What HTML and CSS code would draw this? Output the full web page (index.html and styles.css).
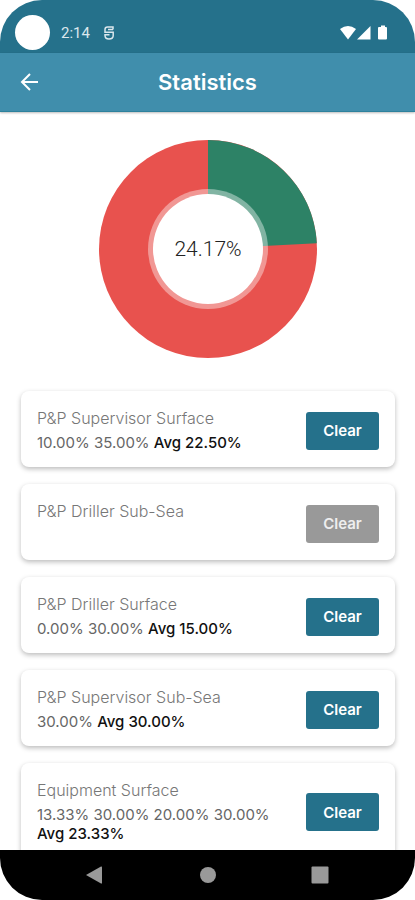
FILE: index.html
```html
<!DOCTYPE html>
<html lang="en">
<head>
<meta charset="utf-8">
<meta name="viewport" content="width=device-width, initial-scale=1">
<title>Statistics</title>
<link rel="stylesheet" href="styles.css">
</head>
<body>
<div class="phone">
  <div class="status">
    <span class="camera"></span>
    <span class="time">2:14</span>
    <svg class="notice" width="12" height="16" viewBox="0 0 12 16" fill="none" stroke="currentColor" stroke-width="1.500"><path d="M10 4.500V2H4.500Q2 2 2 4.500V7.200H10.200V10.500Q10.200 14 6 14Q2 14 2 10.500V9.800H6.500M5 4.600H10"/></svg>
    <svg class="signals" width="48" height="16" viewBox="0 0 48 16" fill="currentColor"><path d="M0 4Q8-2 16 4L8 14.500Z"/><path d="M17 14.500 30.500 1V14.500Z"/><path d="M39 2h2V.500h4V2h1q1 0 1 1v10.500q0 1-1 1h-7q-1 0-1-1V3q0-1 1-1Z"/></svg>
  </div>
  <header class="appbar">
    <button class="back" type="button" aria-label="Back"><svg width="20" height="20" viewBox="0 0 20 20" fill="none" stroke="currentColor" stroke-width="2"><path d="M18 10H2M10 2 2 10l8 8"/></svg></button>
    <h1>Statistics</h1>
  </header>
  <main>
    <div class="chart">
      <svg width="220" height="220" viewBox="0 0 220 220" aria-hidden="true">
        <circle cx="110" cy="110" r="109" fill="#e8524e"/>
        <path d="M110 110V1A109 109 0 0 1 218.850 104.300Z" fill="#2d8266"/>
        <circle cx="110" cy="110" r="60" fill="#fff" fill-opacity=".4"/>
        <circle cx="110" cy="110" r="55" fill="#fff"/>
      </svg>
      <span class="total">24.17%</span>
    </div>
    <ul class="cards">
      <li class="card"><div class="info"><h2>P&amp;P Supervisor Surface</h2><p>10.00% 35.00% <b>Avg 22.50%</b></p></div><button class="clear" type="button">Clear</button></li>
      <li class="card"><div class="info"><h2>P&amp;P Driller Sub-Sea</h2><p></p></div><button class="clear" type="button" disabled>Clear</button></li>
      <li class="card"><div class="info"><h2>P&amp;P Driller Surface</h2><p>0.00% 30.00% <b>Avg 15.00%</b></p></div><button class="clear" type="button">Clear</button></li>
      <li class="card"><div class="info"><h2>P&amp;P Supervisor Sub-Sea</h2><p>30.00% <b>Avg 30.00%</b></p></div><button class="clear" type="button">Clear</button></li>
      <li class="card"><div class="info"><h2>Equipment Surface</h2><p>13.33% 30.00% 20.00% 30.00% <b>Avg 23.33%</b></p></div><button class="clear" type="button">Clear</button></li>
    </ul>
  </main>
  <nav class="system">
    <button type="button" aria-label="Back"><svg width="20" height="20" viewBox="0 0 20 20"><path d="M1 10 16 1.500q1-.5 1 1v15q0 1.500-1 1Z"/></svg></button>
    <button type="button" aria-label="Home"><svg width="20" height="20" viewBox="0 0 20 20"><circle cx="10" cy="10" r="8"/></svg></button>
    <button type="button" aria-label="Recent apps"><svg width="20" height="20" viewBox="0 0 20 20"><rect x="1.500" y="1.500" width="17" height="17" rx="1"/></svg></button>
  </nav>
</div>
</body>
</html>
```
FILE: styles.css
```css
* { box-sizing: border-box; }
body { margin: 0; background: #fff; font-family: Inter, sans-serif; }
button { border: 0; padding: 0; font: inherit; }
h1, h2, p, ul { margin: 0; padding: 0; }

.phone {
  display: flex;
  flex-direction: column;
  height: 100vh;
  overflow: hidden;
  border-radius: 42px;
}

.status {
  display: flex;
  flex: none;
  align-items: flex-end;
  padding: 15px 27px 3px 15px;
  background: #25718b;
  color: #fff;
}
.camera { width: 35px; height: 35px; border-radius: 50%; background: #fff; }
.time { margin: 0 0 7px 11px; font: 15px/20px Roboto, sans-serif; color: #dbe7ed; }
.notice { margin: 0 0 9px 13px; color: #dbe7ed; }
.signals { margin: 0 0 9px auto; }

.appbar {
  display: grid;
  flex: none;
  grid-template-columns: 20px 1fr 20px;
  align-items: center;
  padding: 16px 20px;
  border-bottom: 1px solid #2d829d;
  background: #408eac;
  box-shadow: 0 1px 2px #0004;
  color: #fff;
}
.appbar h1 { font-size: 22px; line-height: 26px; font-weight: 600; text-align: center; }
.back { display: flex; background: none; color: inherit; }

main { flex: 1; min-height: 0; overflow: hidden; padding: 27px 20px 0 21px; }
.chart { display: grid; place-items: center; }
.chart > * { grid-area: 1 / 1; }
.chart svg { display: block; }
.total { font: 300 21px/26px Roboto, sans-serif; color: #222; }

.cards { display: grid; gap: 17px; margin-top: 32px; list-style: none; }
.card {
  display: flex;
  align-items: center;
  gap: 16px;
  padding: 18px 16px 15px;
  border-radius: 8px;
  background: #fff;
  box-shadow: 0 2px 5px #0004;
}
.info { flex: 1; font-size: 15px; line-height: 19px; color: #666; }
.info h2 { margin-bottom: 5px; font-size: 16px; line-height: 19px; font-weight: 300; color: #777; }
.info p { min-height: 19px; }
.info b { font-weight: 500; color: #111; white-space: nowrap; }
.clear {
  width: 73px;
  height: 38px;
  border-radius: 3px;
  background: #25718b;
  color: #fff;
  font-size: 15px;
  font-weight: 600;
}
.clear:disabled { background: #999; color: #eee; }

.system {
  display: flex;
  flex: none;
  justify-content: space-between;
  padding: 15px 85px;
  background: #000;
}
.system button { display: flex; background: none; }
.system svg { fill: #999; }
```
